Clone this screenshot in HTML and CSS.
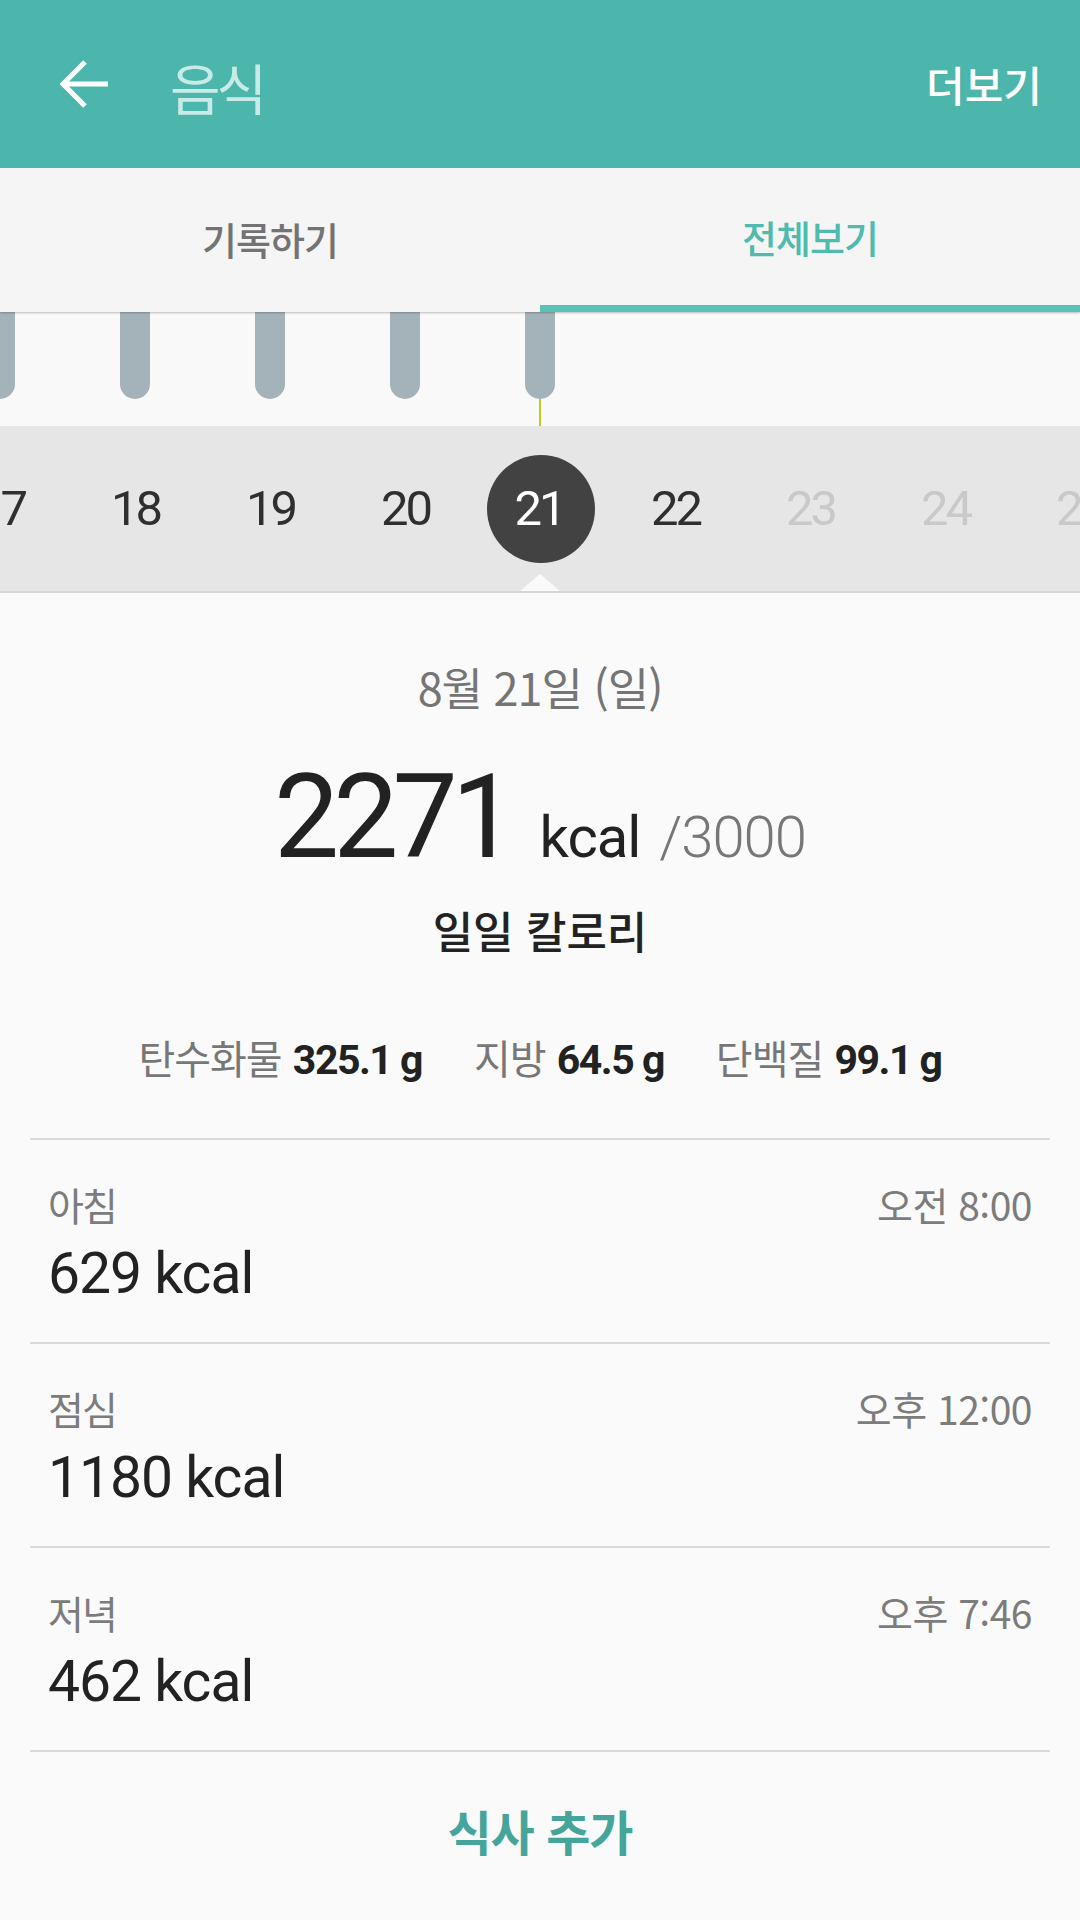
FILE: index.html
```html
<!DOCTYPE html>
<html lang="ko">
<head>
<meta charset="utf-8">
<title>음식</title>
<link rel="stylesheet" href="styles.css">
</head>
<body>
<div class="screen">
  <header class="appbar">
    <svg class="back" width="48" height="48" viewBox="0 0 48 48" aria-hidden="true">
      <path d="M48 24H4 M25 2 L3 24 L25 46" fill="none" stroke="#ffffff" stroke-width="5"/>
    </svg>
    <h1 class="title">음식</h1>
    <span class="more">더보기</span>
  </header>

  <nav class="tabs">
    <div class="tab">기록하기</div>
    <div class="tab active">전체보기</div>
  </nav>

  <div class="chart">
    <div class="bars">
      <span class="bar"></span>
      <span class="bar"></span>
      <span class="bar"></span>
      <span class="bar"></span>
      <span class="bar"></span>
    </div>
    <span class="marker"></span>
  </div>

  <div class="dates">
    <div class="date-row">
      <span class="date">17</span>
      <span class="date">18</span>
      <span class="date">19</span>
      <span class="date">20</span>
      <span class="date"><span class="selected">21</span></span>
      <span class="date">22</span>
      <span class="date future">23</span>
      <span class="date future">24</span>
      <span class="date future">25</span>
    </div>
    <span class="notch"></span>
  </div>

  <section class="summary">
    <div class="day">8월 21일 (일)</div>
    <div class="total"><span class="big">2271</span> <span class="unit">kcal</span> <span class="goal">/3000</span></div>
    <div class="label">일일 칼로리</div>
    <div class="macros">
      <span class="macro"><span class="m-name">탄수화물</span> <b>325.1 g</b></span>
      <span class="macro"><span class="m-name">지방</span> <b>64.5 g</b></span>
      <span class="macro"><span class="m-name">단백질</span> <b>99.1 g</b></span>
    </div>
  </section>

  <section class="meals">
    <div class="meal">
      <div class="meal-head"><span class="meal-name">아침</span><span class="meal-time">오전 8:00</span></div>
      <div class="meal-kcal">629 kcal</div>
    </div>
    <div class="meal">
      <div class="meal-head"><span class="meal-name">점심</span><span class="meal-time">오후 12:00</span></div>
      <div class="meal-kcal">1180 kcal</div>
    </div>
    <div class="meal">
      <div class="meal-head"><span class="meal-name">저녁</span><span class="meal-time">오후 7:46</span></div>
      <div class="meal-kcal">462 kcal</div>
    </div>
    <div class="add">식사 추가</div>
  </section>
</div>
</body>
</html>
```

FILE: styles.css
```css
html, body {
  margin: 0;
  padding: 0;
}
body {
  width: 1080px;
  height: 1920px;
  background: #fafafa;
  font-family: "Noto Sans CJK KR", "Noto Sans", sans-serif;
  overflow: hidden;
}
.screen {
  width: 1080px;
  height: 1920px;
  background: #fafafa;
  overflow: hidden;
}

/* App bar */
.appbar {
  height: 168px;
  background: #4db6ac;
  display: flex;
  align-items: center;
  padding: 0 38px 0 60px;
  box-sizing: border-box;
}
.back {
  display: block;
  flex: none;
}
.title {
  margin: 0 0 0 62px;
  font-size: 55px;
  font-weight: 400;
  letter-spacing: -4px;
  color: #c9ebe7;
  line-height: 64px;
  padding-top: 4px;
  flex: 1;
}
.more {
  font-size: 42px;
  font-weight: 500;
  letter-spacing: 0;
  color: #ffffff;
  line-height: 50px;
}

/* Tabs */
.tabs {
  position: relative;
  z-index: 2;
  height: 144px;
  display: flex;
  background: #f5f5f5;
  box-shadow: 0 1px 2px rgba(0, 0, 0, 0.25);
}
.tab {
  flex: 1;
  display: flex;
  align-items: center;
  justify-content: center;
  font-size: 38px;
  font-weight: 500;
  letter-spacing: -1px;
  color: #737373;
  box-sizing: border-box;
  padding-bottom: 4px;
}
.tab.active {
  color: #4fbaae;
  border-bottom: 7px solid #55c3b7;
  padding-bottom: 0;
}

/* Chart */
.chart {
  position: relative;
  height: 114px;
  background: #f9f9f9;
}
.bars {
  display: flex;
  gap: 105px;
  margin-left: -15px;
}
.bar {
  display: block;
  width: 30px;
  height: 87px;
  background: #a4b2b9;
  border-radius: 0 0 15px 15px;
}
.marker {
  position: absolute;
  left: 539px;
  top: 87px;
  width: 2px;
  height: 27px;
  background: #c2cb1c;
}

/* Dates */
.dates {
  position: relative;
  height: 165px;
  background: #e6e6e6;
  border-bottom: 2px solid #d6d6d6;
  overflow: hidden;
}
.date-row {
  display: flex;
  height: 165px;
  align-items: center;
  margin-left: -67px;
}
.date {
  flex: none;
  width: 135px;
  display: flex;
  justify-content: center;
  align-items: center;
  font-family: Roboto, "Noto Sans", sans-serif;
  font-size: 49px;
  letter-spacing: -3px;
  color: #2f2f2f;
}
.date.future {
  color: #c9c9c9;
}
.selected {
  width: 108px;
  height: 108px;
  border-radius: 50%;
  background: #424242;
  color: #ffffff;
  display: flex;
  align-items: center;
  justify-content: center;
  padding-right: 3px;
  box-sizing: border-box;
}
.notch {
  position: absolute;
  left: 520px;
  bottom: 0;
  width: 40px;
  height: 17px;
  background: #fafafa;
  clip-path: polygon(50% 0, 100% 100%, 0 100%);
}

/* Summary */
.summary {
  text-align: center;
  padding-top: 66px;
}
.day {
  font-size: 45px;
  line-height: 56px;
  color: #757575;
  letter-spacing: -1px;
}
.total {
  margin-top: 37px;
  font-family: Roboto, "Noto Sans", sans-serif;
  font-size: 116px;
  line-height: 130px;
  color: #222222;
}
.big {
  font-weight: 400;
  letter-spacing: -6px;
}
.unit {
  font-size: 58px;
  line-height: 1;
  color: #222222;
  letter-spacing: -1px;
}
.goal {
  font-size: 58px;
  line-height: 1;
  font-weight: 300;
  color: #777777;
  letter-spacing: -1px;
  margin-left: -10px;
}
.label {
  margin-top: 20px;
  font-size: 44px;
  line-height: 56px;
  font-weight: 500;
  color: #222222;
  letter-spacing: 0;
}
.macros {
  margin-top: 71px;
  display: flex;
  justify-content: center;
  gap: 52px;
  line-height: 56px;
}
.macro {
  font-size: 40px;
}
.m-name {
  color: #777777;
  letter-spacing: -1px;
}
.macro b {
  font-family: Roboto, "Noto Sans", sans-serif;
  font-size: 41px;
  font-weight: 700;
  color: #222222;
  letter-spacing: -1.5px;
}

/* Meals */
.meals {
  margin: 50px 30px 0;
}
.meal {
  border-top: 2px solid #dadada;
  padding: 39px 18px 36px;
}
.meal-head {
  display: flex;
  justify-content: space-between;
  line-height: 50px;
  font-size: 39px;
  color: #7c7c7c;
}
.meal-name {
  letter-spacing: -2px;
}
.meal-time {
  letter-spacing: -0.5px;
}
.meal-kcal {
  margin-top: 13px;
  font-family: Roboto, "Noto Sans", sans-serif;
  font-size: 57px;
  line-height: 64px;
  color: #222222;
  letter-spacing: -1px;
}
.add {
  border-top: 2px solid #dadada;
  padding-top: 48px;
  text-align: center;
  font-size: 48px;
  line-height: 60px;
  font-weight: 700;
  color: #45a59b;
  letter-spacing: -1px;
}
```
